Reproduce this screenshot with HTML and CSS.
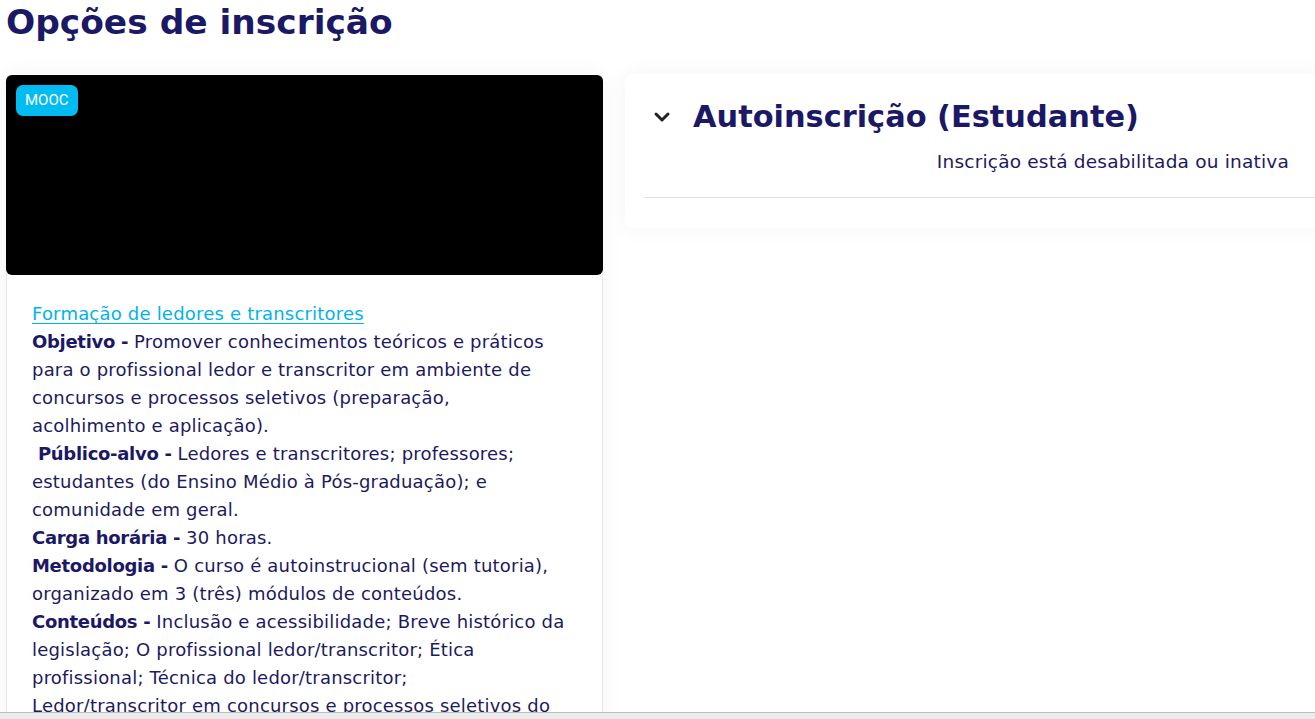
FILE: index.html
```html
<!DOCTYPE html>
<html lang="pt-BR">
<head>
  <meta charset="UTF-8" />
  <meta name="viewport" content="width=device-width, initial-scale=1.0" />
  <title>Opções de inscrição</title>
  <link rel="stylesheet" href="styles.css">
</head>
<body>
  <h1 class="page-title">Opções de inscrição</h1>

  <div class="enrol-layout">
    <!-- Course summary card -->
    <div class="course-card">
      <div class="course-image">
        <span class="badge">MOOC</span>
      </div>
      <div class="course-body">
        <a href="#" class="course-link">Formação de ledores e transcritores</a><br>
        <strong>Objetivo -</strong> Promover conhecimentos teóricos e práticos para o profissional ledor e transcritor em ambiente de concursos e processos seletivos (preparação, acolhimento e aplicação).<br>
        &nbsp;<strong>Público-alvo -</strong> Ledores e transcritores; professores; estudantes (do Ensino Médio à Pós-graduação); e comunidade em geral.<br>
        <strong>Carga horária -</strong> 30 horas.<br>
        <strong>Metodologia -</strong> O curso é autoinstrucional (sem tutoria), organizado em 3 (três) módulos de conteúdos.<br>
        <strong>Conteúdos -</strong> Inclusão e acessibilidade; Breve histórico da legislação; O profissional ledor/transcritor; Ética profissional; Técnica do ledor/transcritor; Ledor/transcritor em concursos e processos seletivos do INEP.
      </div>
    </div>

    <!-- Enrolment method -->
    <div class="enrol-card">
      <div class="enrol-header">
        <svg class="chevron" width="18" height="18" viewBox="0 0 18 18">
          <path d="M3 6 L9 12 L15 6" fill="none" stroke="#222" stroke-width="3" stroke-linecap="round" stroke-linejoin="round"/>
        </svg>
        <h2>Autoinscrição (Estudante)</h2>
      </div>
      <div class="enrol-status">Inscrição está desabilitada ou inativa</div>
      <hr class="enrol-divider">
    </div>
  </div>

  <div class="hscroll"></div>
</body>
</html>
```

FILE: styles.css
```css
body {
  font-family: "DejaVu Sans", Verdana, sans-serif;
  margin: 0;
  padding: 0 0 0 6px;
  background-color: #fff;
  color: #1c1a5e;
  overflow: hidden;
}
.page-title {
  margin: 0;
  font-size: 34.4px;
  line-height: 44px;
  font-weight: bold;
  color: #1b1965;
}
.enrol-layout {
  display: flex;
  align-items: flex-start;
  gap: 22px;
  margin-top: 30px;
  width: 1320px;
}
.course-card {
  width: 595px;
  flex: none;
  background-color: #fff;
  border: 1px solid #e8e8e8;
  border-top: none;
  border-radius: 6px;
  box-shadow: 0 0 22px rgba(0, 0, 0, 0.05);
}
.course-image {
  height: 200px;
  margin: 1px -1px 0;
  padding: 10px;
  box-sizing: border-box;
  background-color: #000;
  border-radius: 6px;
}
.badge {
  display: inline-block;
  background-color: #00bcf2;
  color: #fff;
  font-family: Roboto, Arial, sans-serif;
  font-size: 15px;
  line-height: 31px;
  padding: 0 9px;
  border-radius: 7px;
}
.course-body {
  padding: 25px 35px 40px 25px;
  font-size: 18px;
  letter-spacing: 0.2px;
  line-height: 28px;
  color: #1c1a5e;
}
.course-body strong {
  font-weight: bold;
  letter-spacing: -0.3px;
  color: #1b1965;
}
.course-link {
  color: #00b2ec;
  text-decoration: underline;
  text-underline-offset: 3px;
}
.enrol-card {
  flex: 1;
  background-color: #fff;
  border-radius: 8px;
  padding: 20px 0 30px 20px;
  box-shadow: 0 0 22px rgba(0, 0, 0, 0.05);
}
.enrol-header {
  display: flex;
  align-items: center;
  gap: 22px;
  padding-left: 8px;
}
.enrol-header h2 {
  margin: 0;
  font-size: 30.4px;
  line-height: 46px;
  font-weight: bold;
  color: #1b1965;
}
.enrol-status {
  font-size: 18.5px;
  letter-spacing: 0.2px;
  line-height: 24px;
  margin-top: 10px;
  padding-right: 37px;
  text-align: right;
  color: #1c1a5e;
}
.enrol-divider {
  border: none;
  border-top: 1px solid #dedede;
  margin: 23px 0 0 0;
}
.hscroll {
  position: fixed;
  left: 0;
  right: 0;
  bottom: 0;
  height: 6px;
  background-color: #ececec;
  border-top: 1px solid #bdbdbd;
}
```
